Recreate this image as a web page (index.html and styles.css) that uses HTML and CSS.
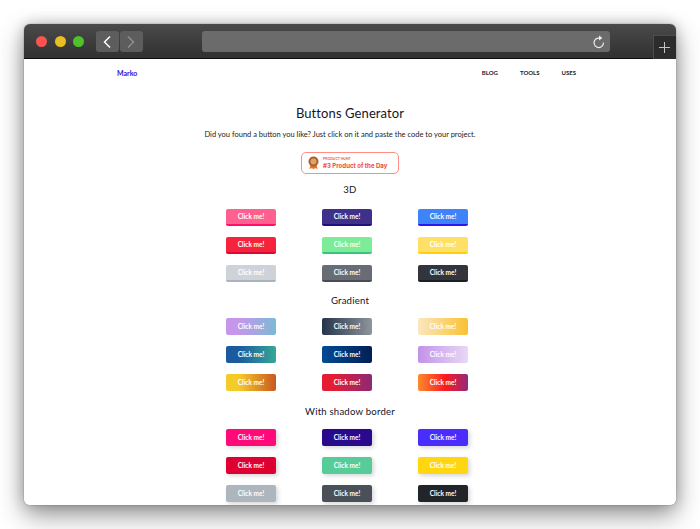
FILE: index.html
```html
<!DOCTYPE html>
<html lang="en">
<head>
<meta charset="utf-8">
<title>Buttons Generator</title>
<link rel="stylesheet" href="styles.css">
</head>
<body>
<div class="window">
  <header class="toolbar">
    <span class="dot dot-red"></span>
    <span class="dot dot-yellow"></span>
    <span class="dot dot-green"></span>
    <div class="nav-buttons">
      <span class="nav-btn"><svg width="10" height="14" viewBox="0 0 10 14"><path d="M8 1.5 2.5 7 8 12.5" fill="none" stroke="#fff" stroke-width="1.5"/></svg></span>
      <span class="nav-btn"><svg width="10" height="14" viewBox="0 0 10 14"><path d="M2 1.5 7.5 7 2 12.5" fill="none" stroke="#8e8e8e" stroke-width="1.5"/></svg></span>
    </div>
    <div class="address">
      <svg width="13" height="14" viewBox="0 0 13 14"><path d="M7.5 3.2A4.7 4.7 0 1 0 11.4 7.6" fill="none" stroke="#eee" stroke-width="1.2"/><path d="M7 0.6 10.4 3 7 5.4Z" fill="#eee"/></svg>
    </div>
    <div class="new-tab"><svg width="11" height="11" viewBox="0 0 11 11"><path d="M5.5 0V11M0 5.5H11" stroke="#c4c4c4" stroke-width="1"/></svg></div>
  </header>
  <main class="page">
    <nav class="site-nav">
      <a class="brand">Marko</a>
      <div class="links"><a>BLOG</a><a>TOOLS</a><a>USES</a></div>
    </nav>
    <h1 class="title">Buttons Generator</h1>
    <p class="lead">Did you found a button you like? Just click on it and paste the code to your project.</p>
    <div class="badge">
      <svg width="11" height="14" viewBox="0 0 11 14"><path d="M2.5 8 1.5 13 4 12 5.5 13.5 7 12 9.5 13 8.5 8Z" fill="#e8742c"/><circle cx="5.5" cy="5.5" r="5" fill="#a5622f"/><circle cx="5.5" cy="5.5" r="3" fill="#dca36a"/></svg>
      <div class="badge-text"><span class="badge-small">PRODUCT HUNT</span><span class="badge-main">#3 Product of the Day</span></div>
    </div>
    <h2 class="section first">3D</h2>
    <div class="grid">
      <button class="btn d3 a1">Click me!</button><button class="btn d3 a2">Click me!</button><button class="btn d3 a3">Click me!</button>
      <button class="btn d3 a4">Click me!</button><button class="btn d3 a5">Click me!</button><button class="btn d3 a6">Click me!</button>
      <button class="btn d3 a7">Click me!</button><button class="btn d3 a8">Click me!</button><button class="btn d3 a9">Click me!</button>
    </div>
    <h2 class="section">Gradient</h2>
    <div class="grid">
      <button class="btn g1">Click me!</button><button class="btn g2">Click me!</button><button class="btn g3">Click me!</button>
      <button class="btn g4">Click me!</button><button class="btn g5">Click me!</button><button class="btn g6">Click me!</button>
      <button class="btn g7">Click me!</button><button class="btn g8">Click me!</button><button class="btn g9">Click me!</button>
    </div>
    <h2 class="section last">With shadow border</h2>
    <div class="grid">
      <button class="btn sh s1">Click me!</button><button class="btn sh s2">Click me!</button><button class="btn sh s3">Click me!</button>
      <button class="btn sh s4">Click me!</button><button class="btn sh s5">Click me!</button><button class="btn sh s6">Click me!</button>
      <button class="btn sh s7">Click me!</button><button class="btn sh s8">Click me!</button><button class="btn sh s9">Click me!</button>
    </div>
  </main>
</div>
</body>
</html>
```
FILE: styles.css
```css
* { box-sizing: border-box; }
html, body { margin: 0; height: 100%; }
body {
  padding: 24px;
  background: #fff;
  font-family: "Lato", "Open Sans", sans-serif;
  overflow: hidden;
}
.window {
  height: 481px;
  display: flex;
  flex-direction: column;
  border-radius: 6px;
  overflow: hidden;
  box-shadow: 0 10px 26px rgba(0,0,0,.42), 0 0 14px rgba(0,0,0,.2), 0 0 1px rgba(0,0,0,.7);
}
.toolbar {
  height: 35px;
  flex: none;
  display: flex;
  align-items: flex-start;
  padding: 7px 0 0 12px;
  background: linear-gradient(#4a4a4a, #333 90%);
  border-bottom: 1px solid #0c0c0c;
}
.dot { width: 11px; height: 11px; border-radius: 50%; margin: 5px 7.5px 0 0; flex: none; }
.dot-red { background: #fb5350; }
.dot-yellow { background: #e9bd24; }
.dot-green { background: #4fc12c; }
.nav-buttons { display: flex; gap: 1px; margin-left: 4px; }
.nav-btn {
  width: 23px; height: 21px;
  display: flex; align-items: center; justify-content: center;
  background: #5d5d5d;
  border-radius: 3px;
}
.address {
  width: 408px; height: 21px;
  margin-left: 59px;
  display: flex; align-items: center; justify-content: flex-end;
  padding-right: 5px;
  background: #6b6b6b;
  border-radius: 3px;
}
.new-tab {
  width: 23px; height: 24px;
  margin: 4px 0 0 43px;
  display: flex; align-items: center; justify-content: center;
  background: #2c2c2c;
  border: 1px solid #4c4c4c;
  border-right: 0; border-bottom: 0;
}
.page {
  flex: 1;
  min-height: 0;
  overflow: hidden;
  background: #fff;
  display: flex;
  flex-direction: column;
  align-items: center;
}
.site-nav {
  align-self: stretch;
  display: flex;
  justify-content: space-between;
  align-items: center;
  height: 26px;
  padding: 1px 100px 0 93px;
  font-size: 7px;
  line-height: 10px;
}
.brand { color: #2a10e0; font-weight: 700; }
.links { display: flex; gap: 22px; color: #222; font-weight: 700; font-size: 6px; }
.title {
  margin: 19px 0 0;
  font-size: 13px;
  line-height: 18px;
  font-weight: 400;
  letter-spacing: .1px;
  color: #151528;
}
.lead {
  margin: 8px 20px 0 0;
  font-size: 7.5px;
  line-height: 10px;
  color: #1c1c1c;
}
.badge {
  margin-top: 12px;
  width: 98px; height: 22px;
  display: flex; align-items: center; gap: 4px;
  padding-left: 6px;
  border: 1px solid #ff8f85;
  border-radius: 5px;
}
.badge-text { display: flex; flex-direction: column; }
.badge-small { font-size: 3.5px; line-height: 5px; color: #f2564a; font-weight: 700; }
.badge-main { font-size: 6.1px; line-height: 8px; color: #ee4a3c; font-weight: 700; white-space: nowrap; font-family: "Inter", sans-serif; }
.section {
  margin: 12px 0 0;
  font-size: 9.6px;
  line-height: 14px;
  font-weight: 400;
  letter-spacing: .2px;
  color: #151528;
}
.section.first { margin-top: 9px; }
.section.last { margin-top: 14px; }
.grid {
  margin: 10px 6px 0 0;
  display: grid;
  grid-template-columns: repeat(3, 50px);
  column-gap: 46px;
  row-gap: 11px;
}
.section.first + .grid { margin-top: 12px; }
.btn {
  width: 50px; height: 17px;
  padding: 0;
  border: 0;
  border-radius: 2px;
  color: #fff;
  font-family: inherit;
  font-size: 6.5px;
  font-weight: 700;
  line-height: 15px;
}
.d3 { border-bottom: 2px solid; }
.a1 { background: #ff6090; border-color: #ff0f66; }
.a2 { background: #3f3189; border-color: #1f0f80; }
.a3 { background: #3f83fb; border-color: #2a18f0; }
.a4 { background: #f5243c; border-color: #dc0a30; }
.a5 { background: #7cec96; border-color: #37c47c; }
.a6 { background: #ffe066; border-color: #ffcf0a; }
.a7 { background: #ced3da; border-color: #aab2bb; }
.a8 { background: #686d75; border-color: #484d55; }
.a9 { background: #32363c; border-color: #1c1f23; }
.g1 { background: linear-gradient(90deg, #c696ea 25%, #7bbad6); }
.g2 { background: linear-gradient(90deg, #26344a, #8e959c); }
.g3 { background: linear-gradient(90deg, #fbe7bf, #fac132); }
.g4 { background: linear-gradient(90deg, #1b5a9f 25%, #36a796); }
.g5 { background: linear-gradient(90deg, #024a94, #011f56); }
.g6 { background: linear-gradient(90deg, #c292e8, #e8d8f6); }
.g7 { background: linear-gradient(90deg, #f5cb2a 25%, #c9581f); }
.g8 { background: linear-gradient(90deg, #e31d33 25%, #8b2a75); }
.g9 { background: linear-gradient(90deg, #fc8a2c, #fb1a22 55%, #922a7c); }
.sh { box-shadow: 2px 2px 4px rgba(60,60,70,.2); }
.s1 { background: #ff0a78; }
.s2 { background: #2a0a8c; }
.s3 { background: #4a2cfb; }
.s4 { background: #de0030; }
.s5 { background: #57cc99; }
.s6 { background: #ffd60f; }
.s7 { background: #adb5bd; }
.s8 { background: #495057; }
.s9 { background: #212529; }
```
